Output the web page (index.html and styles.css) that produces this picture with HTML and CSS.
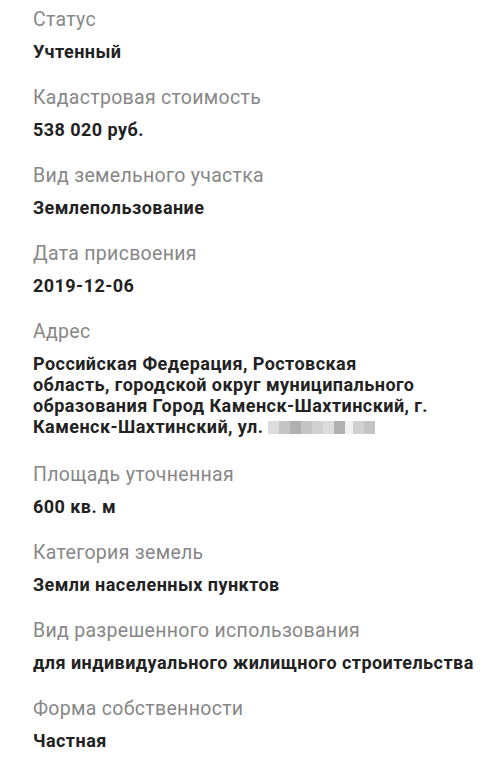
FILE: index.html
```html
<!DOCTYPE html>
<html lang="ru">
<head>
<meta charset="utf-8">
<link rel="stylesheet" href="styles.css">
</head>
<body>
<main class="list">
  <section class="item"><div class="label">Статус</div><div class="value">Учтенный</div></section>
  <section class="item"><div class="label">Кадастровая стоимость</div><div class="value">538 020 руб.</div></section>
  <section class="item"><div class="label">Вид земельного участка</div><div class="value">Землепользование</div></section>
  <section class="item"><div class="label">Дата присвоения</div><div class="value">2019-12-06</div></section>
  <section class="item address"><div class="label">Адрес</div><div class="value multi">Российская Федерация, Ростовская область, городской округ муниципального образования Город Каменск-Шахтинский, г. Каменск-Шахтинский, ул. <span class="blur"><i class="b1"></i><i class="b2"></i><i class="b3"></i><i class="b2"></i><i class="b4"></i><i class="b1"></i><i class="b3"></i><i class="gap"></i><i class="b4"></i><i class="b2"></i></span></div></section>
  <section class="item"><div class="label">Площадь уточненная</div><div class="value">600 кв. м</div></section>
  <section class="item"><div class="label">Категория земель</div><div class="value">Земли населенных пунктов</div></section>
  <section class="item"><div class="label">Вид разрешенного использования</div><div class="value">для индивидуального жилищного строительства</div></section>
  <section class="item"><div class="label">Форма собственности</div><div class="value">Частная</div></section>
</main>
</body>
</html>
```
FILE: styles.css
```css
html, body {
  margin: 0;
  background: #ffffff;
}
body {
  font-family: Roboto, "Noto Sans", sans-serif;
}
.list {
  display: flex;
  flex-direction: column;
  gap: 24px;
  padding: 9px 0 0 33px;
}
.item {
  display: flex;
  flex-direction: column;
  gap: 10px;
}
.item.address {
  padding-bottom: 3px;
}
.label {
  font-size: 19.5px;
  line-height: 22px;
  letter-spacing: 0.3px;
  color: #878787;
}
.value {
  font-size: 18px;
  line-height: 22px;
  letter-spacing: 0.45px;
  font-weight: 700;
  color: #222222;
}
.value.multi {
  line-height: 21px;
  max-width: 400px;
}
.blur {
  display: inline-flex;
  vertical-align: -1px;
  height: 13px;
}
.blur i {
  display: inline-block;
  width: 11px;
  height: 13px;
}
.blur .b1 { background: #dcdcdc; }
.blur .b2 { background: #c4c4c4; }
.blur .b3 { background: #b0b0b0; }
.blur .b4 { background: #d0d0d0; }
.blur .gap { background: #f2f2f2; width: 8px; }
```
